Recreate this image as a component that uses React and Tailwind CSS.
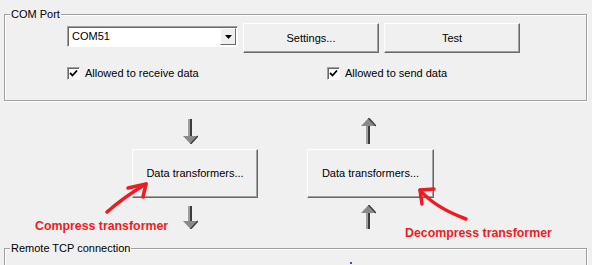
import React from 'react';

const DownArrow = ({ h = 25 }) => (
  <svg width="15" height={h} viewBox={`0 0 15 ${h}`} className="block">
    <rect x="5" y="0" width="2" height={h - 8} fill="#a0a0a0" />
    <rect x="7" y="0" width="2" height={h - 8} fill="#3c3c3c" />
    <polygon points={`0,${h - 8} 15,${h - 8} 7.5,${h}`} fill="#8a8a8a" />
    <polyline points={`15,${h - 8} 7.5,${h}`} stroke="#3c3c3c" strokeWidth="1.5" fill="none" />
  </svg>
);

const UpArrow = ({ h = 25 }) => (
  <svg width="15" height={h} viewBox={`0 0 15 ${h}`} className="block">
    <polygon points="7.5,0 15,8 0,8" fill="#8a8a8a" />
    <polyline points="7.5,0 15,8" stroke="#3c3c3c" strokeWidth="1.5" fill="none" />
    <rect x="5" y="8" width="2" height={h - 8} fill="#a0a0a0" />
    <rect x="7" y="8" width="2" height={h - 8} fill="#3c3c3c" />
  </svg>
);

const WinButton = ({ className, children }) => (
  <div
    className={`flex items-center justify-center bg-[#f0f0f0] border border-t-white border-l-white border-r-[#696969] border-b-[#696969] shadow-[inset_-1px_-1px_0_#a0a0a0] ${className}`}
  >
    {children}
  </div>
);

const CheckBox = ({ label }) => (
  <div className="flex items-center gap-[5px]">
    <div className="w-[13px] h-[13px] bg-white border border-t-[#a0a0a0] border-l-[#a0a0a0] border-r-white border-b-white shadow-[inset_1px_1px_0_#696969] flex items-center justify-center">
      <svg width="9" height="9" viewBox="0 0 9 9">
        <polyline points="1,4 3.5,6.5 8,1.5" stroke="#000" strokeWidth="1.8" fill="none" />
      </svg>
    </div>
    <span className="leading-[13px]">{label}</span>
  </div>
);

export default function App() {
  return (
    <div className="relative w-[592px] h-[265px] overflow-hidden bg-[#f0f0f0] font-['Liberation_Sans',Arial,sans-serif] text-[11px] text-[#000]">
      {/* COM Port group */}
      <div className="pt-[14px] pl-[4px]">
        <div className="relative w-[583px] h-[87px] border border-[#a0a0a0] shadow-[1px_1px_0_#fff,inset_1px_1px_0_#fff]">
          <span className="absolute left-[5px] top-[-7px] px-[1px] bg-[#f0f0f0] leading-[13px]">COM Port</span>
          <div className="flex items-start pt-[8px] pl-[62px]">
            <div className="mt-[3px] w-[171px] h-[21px] flex bg-white border border-t-[#a0a0a0] border-l-[#a0a0a0] border-r-white border-b-white shadow-[inset_1px_1px_0_#696969]">
              <span className="flex-1 pl-[4px] pt-[1px] leading-[17px]">COM51</span>
              <div className="mt-[1px] mr-px w-[16px] h-[17px] flex items-center justify-center bg-[#f0f0f0] border border-t-white border-l-white border-r-[#696969] border-b-[#696969]">
                <svg width="7" height="4" viewBox="0 0 7 4">
                  <polygon points="0,0 7,0 3.5,4" fill="#000" />
                </svg>
              </div>
            </div>
            <WinButton className="ml-[5px] w-[136px] h-[30px]">Settings...</WinButton>
            <WinButton className="ml-[5px] w-[136px] h-[30px]">Test</WinButton>
          </div>
          <div className="flex mt-[14px] pl-[62px]">
            <div className="w-[260px]">
              <CheckBox label="Allowed to receive data" />
            </div>
            <CheckBox label="Allowed to send data" />
          </div>
        </div>
      </div>

      {/* transformers */}
      <div className="flex h-[147px] pl-[132px]">
        <div className="flex flex-col w-[126px]">
          <div className="ml-[51px] mt-[18px]">
            <DownArrow h={25} />
          </div>
          <WinButton className="mt-[5px] w-[126px] h-[49px] leading-[13px]">Data transformers...</WinButton>
          <div className="ml-[51px] mt-[8px]">
            <DownArrow h={23} />
          </div>
        </div>
        <div className="flex flex-col ml-[49px] w-[127px]">
          <div className="ml-[54px] mt-[17px]">
            <UpArrow h={26} />
          </div>
          <WinButton className="mt-[5px] w-[127px] h-[49px] leading-[13px]">Data transformers...</WinButton>
          <div className="ml-[54px] mt-[7px]">
            <UpArrow h={24} />
          </div>
        </div>
      </div>

      {/* Remote TCP group */}
      <div className="pl-[4px]">
        <div className="relative w-[583px] h-[40px] border border-[#a0a0a0] shadow-[1px_1px_0_#fff,inset_1px_1px_0_#fff]">
          <span className="absolute left-[5px] top-[-7px] px-[1px] bg-[#f0f0f0] leading-[13px]">Remote TCP connection</span>
          <div className="ml-[345px] mt-[13px] w-[2px] h-[2px] bg-[#3050d0]" />
        </div>
      </div>

      {/* red annotations */}
      <span className="absolute left-[35px] top-[219px] text-[12.35px] leading-[14px] font-bold text-[#ed1c24]">
        Compress transformer
      </span>
      <span className="absolute left-[405px] top-[226px] text-[12.35px] leading-[14px] font-bold text-[#ed1c24]">
        Decompress transformer
      </span>
      <svg className="absolute left-0 top-0 pointer-events-none" width="592" height="265" viewBox="0 0 592 265">
        <g stroke="#ed1c24" strokeWidth="3.5" strokeLinecap="round" strokeLinejoin="round" fill="none">
          <path d="M107 212 Q124 197 146 184" />
          <path d="M128 188 L146 184 L143 197" />
          <path d="M466 219 Q434 207 420 190" />
          <path d="M434 189 L420 190 L422 204" />
        </g>
      </svg>
    </div>
  );
}
